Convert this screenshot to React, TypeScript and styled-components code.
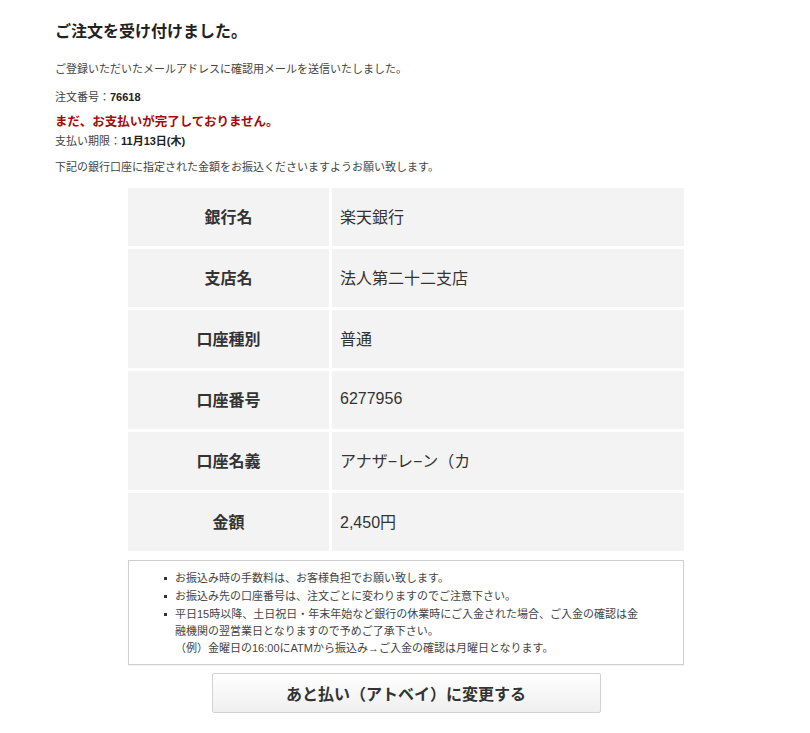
import React from 'react';
import styled, { createGlobalStyle } from 'styled-components';

const GlobalStyle = createGlobalStyle`
	html, body {
		margin: 0;
		padding: 0;
		background: #fff;
	}
	body {
		font-family: 'Liberation Sans', 'Noto Sans CJK JP', sans-serif;
		color: #444;
	}
`;

const Page = styled.main`
	width: 702px;
	margin-left: 55px;
	padding-top: 22px;
`;

const Title = styled.h1`
	margin: 0 0 19px;
	font-size: 16px;
	line-height: 20px;
	font-weight: bold;
	color: #222;
`;

const Line = styled.p<{ gap?: number }>`
	margin: 0 0 ${({ gap }) => gap ?? 12}px;
	font-size: 11px;
	line-height: 16px;
	color: #444;

	strong {
		color: #222;
	}
`;

const Alert = styled.p`
	margin: 0 0 2px;
	font-size: 12.5px;
	line-height: 17px;
	font-weight: bold;
	color: #a80a0a;
`;

const BankTable = styled.table`
	width: 562px;
	margin: 10px auto 0;
	border-collapse: separate;
	border-spacing: 3px;
	table-layout: fixed;
`;

const LabelCell = styled.th`
	width: 201px;
	height: 55px;
	padding: 0 0 3px;
	background: #f3f3f3;
	font-size: 16px;
	font-weight: bold;
	color: #333;
	text-align: center;
`;

const ValueCell = styled.td`
	height: 55px;
	padding: 0 0 3px 8px;
	background: #f3f3f3;
	font-size: 16px;
	color: #333;
`;

const Notes = styled.ul`
	width: 556px;
	box-sizing: border-box;
	margin: 6px auto 0;
	padding: 9px 0 7px 46px;
	border: 1px solid #cfcfcf;
	box-shadow: 0 1px 1px rgba(0, 0, 0, 0.05);
	list-style: none;
`;

const Note = styled.li`
	position: relative;
	width: 468px;
	margin-bottom: 1px;
	font-size: 11px;
	line-height: 17px;
	color: #444;

	&:last-child {
		margin-bottom: 0;
	}

	&::before {
		content: '';
		position: absolute;
		left: -11px;
		top: 7px;
		width: 3px;
		height: 3px;
		background: #333;
	}
`;

const ChangeButton = styled.button`
	display: block;
	width: 389px;
	height: 40px;
	margin: 8px auto 0;
	border: 1px solid #d2d2d2;
	border-radius: 2px;
	background: linear-gradient(#ffffff, #efefef);
	font-family: inherit;
	font-size: 16px;
	font-weight: bold;
	color: #333;
	cursor: pointer;
`;

const account = [
	{ label: '銀行名', value: '楽天銀行' },
	{ label: '支店名', value: '法人第二十二支店' },
	{ label: '口座種別', value: '普通' },
	{ label: '口座番号', value: '6277956' },
	{ label: '口座名義', value: 'アナザ−レ−ン（カ' },
	{ label: '金額', value: '2,450円' },
];

export default function App() {
	return (
		<>
			<GlobalStyle />
			<Page>
				<Title>ご注文を受け付けました。</Title>
				<Line>ご登録いただいたメールアドレスに確認用メールを送信いたしました。</Line>
				<Line gap={9}>
					注文番号：<strong>76618</strong>
				</Line>
				<Alert>まだ、お支払いが完了しておりません。</Alert>
				<Line gap={10}>
					支払い期限：<strong>11月13日(木)</strong>
				</Line>
				<Line gap={0}>下記の銀行口座に指定された金額をお振込くださいますようお願い致します。</Line>

				<BankTable>
					<tbody>
						{account.map(({ label, value }) => (
							<tr key={label}>
								<LabelCell>{label}</LabelCell>
								<ValueCell>{value}</ValueCell>
							</tr>
						))}
					</tbody>
				</BankTable>

				<Notes>
					<Note>お振込み時の手数料は、お客様負担でお願い致します。</Note>
					<Note>お振込み先の口座番号は、注文ごとに変わりますのでご注意下さい。</Note>
					<Note>
						平日15時以降、土日祝日・年末年始など銀行の休業時にご入金された場合、ご入金の確認は金融機関の翌営業日となりますので予めご了承下さい。
						<br />
						（例）金曜日の16:00にATMから振込み→ご入金の確認は月曜日となります。
					</Note>
				</Notes>

				<ChangeButton type="button">あと払い（アトベイ）に変更する</ChangeButton>
			</Page>
		</>
	);
}
